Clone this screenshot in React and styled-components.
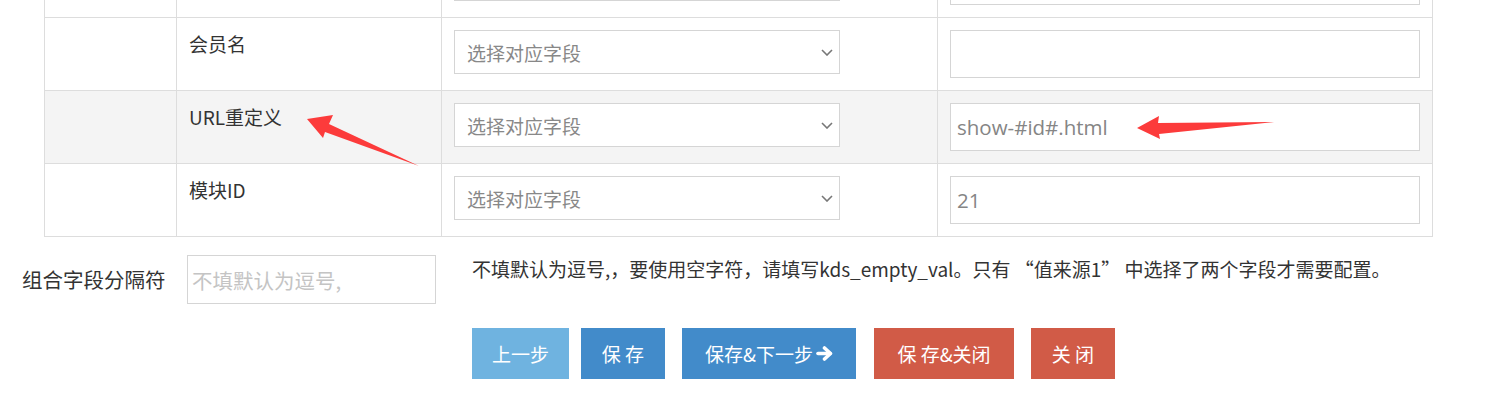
import React from 'react';
import styled, { createGlobalStyle } from 'styled-components';

const GlobalStyle = createGlobalStyle`
  html, body {
    margin: 0;
    padding: 0;
    background: #fff;
  }
  body {
    font-family: "Noto Sans CJK SC", "Noto Sans", sans-serif;
    color: #333;
  }
  * {
    box-sizing: border-box;
  }
`;

const Page = styled.div`
  position: relative;
  width: 1497px;
  height: 404px;
  overflow: hidden;
`;

const Content = styled.div`
  margin-top: -56px;
`;

const Table = styled.div`
  margin-left: 44px;
  width: 1389px;
  border-right: 1px solid #ddd;
  border-bottom: 1px solid #ddd;
`;

const Row = styled.div`
  display: grid;
  grid-template-columns: 132px 265px 496px 495px;
  background: ${(p) => (p.$shaded ? '#f4f4f4' : '#fff')};
`;

const Cell = styled.div`
  border-left: 1px solid #ddd;
  border-top: 1px solid #ddd;
  padding: 12px;
  min-height: 73px;
`;

const FieldName = styled.div`
  font-size: 19px;
  line-height: 28px;
  color: #333;
`;

const SelectWrap = styled.div`
  position: relative;
  width: 386px;
  height: 44px;
`;

const Select = styled.select`
  appearance: none;
  width: 100%;
  height: 100%;
  border: 1px solid #d5d5d5;
  border-radius: 0;
  background: #fff;
  padding: 0 30px 0 12px;
  font-family: inherit;
  font-size: 19px;
  color: #888;
  outline: none;
`;

const Chevron = styled.svg`
  position: absolute;
  right: 7px;
  top: 19px;
  pointer-events: none;
`;

const TextInput = styled.input`
  display: block;
  width: 100%;
  height: ${(p) => p.$h || 48}px;
  border: 1px solid #d5d5d5;
  border-radius: 0;
  background: #fff;
  padding: 0 6px;
  font-family: "Open Sans", "Noto Sans CJK SC", sans-serif;
  font-size: 20.5px;
  color: #858585;
  outline: none;

  &::placeholder {
    color: #c4c4c4;
  }
`;

const FormRow = styled.div`
  display: flex;
  align-items: flex-start;
  margin-top: 18px;
`;

const FormLabel = styled.label`
  width: 187px;
  padding-left: 22px;
  font-size: 20.5px;
  line-height: 49px;
  color: #333;
`;

const SmallInputBox = styled.div`
  width: 249px;

  input {
    padding: 0 4px;
    font-family: "Noto Sans CJK SC", sans-serif;
    font-size: 20.5px;
  }
`;

const HelpText = styled.div`
  margin-left: 36px;
  font-size: 19px;
  line-height: 28px;
  color: #333;
`;

const Actions = styled.div`
  display: flex;
  margin-top: 24px;
  padding-left: 472px;
`;

const Button = styled.button`
  width: ${(p) => p.$w}px;
  height: 51px;
  margin-left: ${(p) => p.$ml || 0}px;
  border: none;
  border-radius: 0;
  padding: 0;
  background: ${(p) => p.$bg};
  color: #fff;
  font-family: inherit;
  font-size: 19px;
  display: flex;
  align-items: center;
  justify-content: center;
  gap: 3px;
  cursor: pointer;
`;

const Marks = styled.svg`
  position: absolute;
  top: 0;
  left: 0;
  pointer-events: none;
`;

const rows = [
  { name: '', value: '' },
  { name: '会员名', value: '' },
  { name: 'URL重定义', value: 'show-#id#.html', shaded: true },
  { name: '模块ID', value: '21' },
];

const ChevronIcon = () => (
  <Chevron width="12" height="7" viewBox="0 0 12 7">
    <polyline points="1,1 6,6 11,1" fill="none" stroke="#777" strokeWidth="1.6" />
  </Chevron>
);

// thick font-awesome style arrow
const ArrowRight = () => (
  <svg width="17" height="15" viewBox="0 0 17 15">
    <g fill="none" stroke="#fff" strokeWidth="3.6" strokeLinecap="round" strokeLinejoin="round">
      <line x1="2" y1="7.5" x2="14" y2="7.5" />
      <polyline points="8.5,2 14.5,7.5 8.5,13" />
    </g>
  </svg>
);

const App = () => {
  return (
    <Page>
      <GlobalStyle />
      <Content>
        <Table>
          {rows.map((r, i) => (
            <Row key={i} $shaded={r.shaded}>
              <Cell />
              <Cell>
                <FieldName>{r.name}</FieldName>
              </Cell>
              <Cell>
                <SelectWrap>
                  <Select defaultValue="">
                    <option value="">选择对应字段</option>
                  </Select>
                  <ChevronIcon />
                </SelectWrap>
              </Cell>
              <Cell>
                <TextInput type="text" defaultValue={r.value} />
              </Cell>
            </Row>
          ))}
        </Table>

        <FormRow>
          <FormLabel>组合字段分隔符</FormLabel>
          <SmallInputBox>
            <TextInput type="text" $h={49} placeholder="不填默认为逗号," />
          </SmallInputBox>
          <HelpText>
            不填默认为逗号,，要使用空字符，请填写kds_empty_val。只有 “值来源1” 中选择了两个字段才需要配置。
          </HelpText>
        </FormRow>

        <Actions>
          <Button $w={97} $bg="#6fb3e0">上一步</Button>
          <Button $w={84} $ml={12} $bg="#428bca">保 存</Button>
          <Button $w={174} $ml={17} $bg="#428bca">
            保存&amp;下一步<ArrowRight />
          </Button>
          <Button $w={140} $ml={18} $bg="#d15b47">保 存&amp;关闭</Button>
          <Button $w={84} $ml={17} $bg="#d15b47">关 闭</Button>
        </Actions>
      </Content>

      <Marks width="1497" height="404" viewBox="0 0 1497 404">
        <polygon points="307,119 333,115 329,124 419,166 325,132 323,138" fill="#fc3b3b" />
        <polygon points="1137,128 1159,116 1158,123 1274,122 1159,134 1160,139" fill="#fc3b3b" />
      </Marks>
    </Page>
  );
};

export default App;
